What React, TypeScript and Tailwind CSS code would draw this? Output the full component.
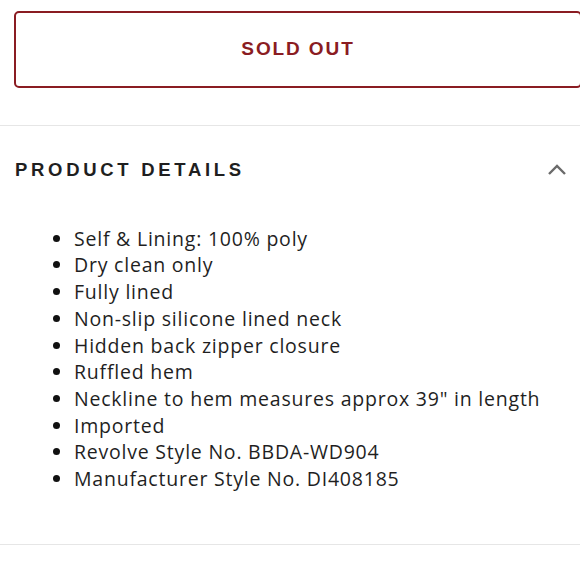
const details = [
  "Self & Lining: 100% poly",
  "Dry clean only",
  "Fully lined",
  "Non-slip silicone lined neck",
  "Hidden back zipper closure",
  "Ruffled hem",
  'Neckline to hem measures approx 39" in length',
  "Imported",
  "Revolve Style No. BBDA-WD904",
  "Manufacturer Style No. DI408185",
];

export default function App() {
  return (
    <div className="w-[580px] h-[580px] overflow-hidden bg-white font-['Open_Sans',sans-serif] text-[#1f1f1f]">
      {/* Sold out button */}
      <div className="pt-[11px] pl-[14px] mr-[-2px]">
        <button className="w-[568px] h-[77px] rounded-[5px] border-2 border-[#8a1c22] bg-white flex items-center justify-center">
          <span className="text-[19px] font-bold tracking-[0.1em] text-[#8a1c22] font-['Liberation_Sans',sans-serif]">
            SOLD OUT
          </span>
        </button>
      </div>

      <div className="mt-[37px] h-px bg-[#e6e6e6]" />

      {/* Accordion header */}
      <div className="flex items-center justify-between pl-[15px] pr-[13px] pt-[30px]">
        <h2 className="text-[18.5px] font-bold tracking-[0.2em] text-[#1f1f1f] font-['Liberation_Sans',sans-serif]">
          PRODUCT DETAILS
        </h2>
        <svg width="20" height="12" viewBox="0 0 20 12" fill="none" stroke="#6b6b6b" strokeWidth="2.4">
          <path d="M2 10 L10 2 L18 10" />
        </svg>
      </div>

      {/* Details list */}
      <ul className="list-disc pl-[74px] pt-[42px] text-[19.5px] leading-[26.7px] tracking-[0.04em] marker:text-[#111]">
        {details.map((d) => (
          <li key={d}>{d}</li>
        ))}
      </ul>

      <div className="mt-[51px] h-px bg-[#e6e6e6]" />
    </div>
  );
}
